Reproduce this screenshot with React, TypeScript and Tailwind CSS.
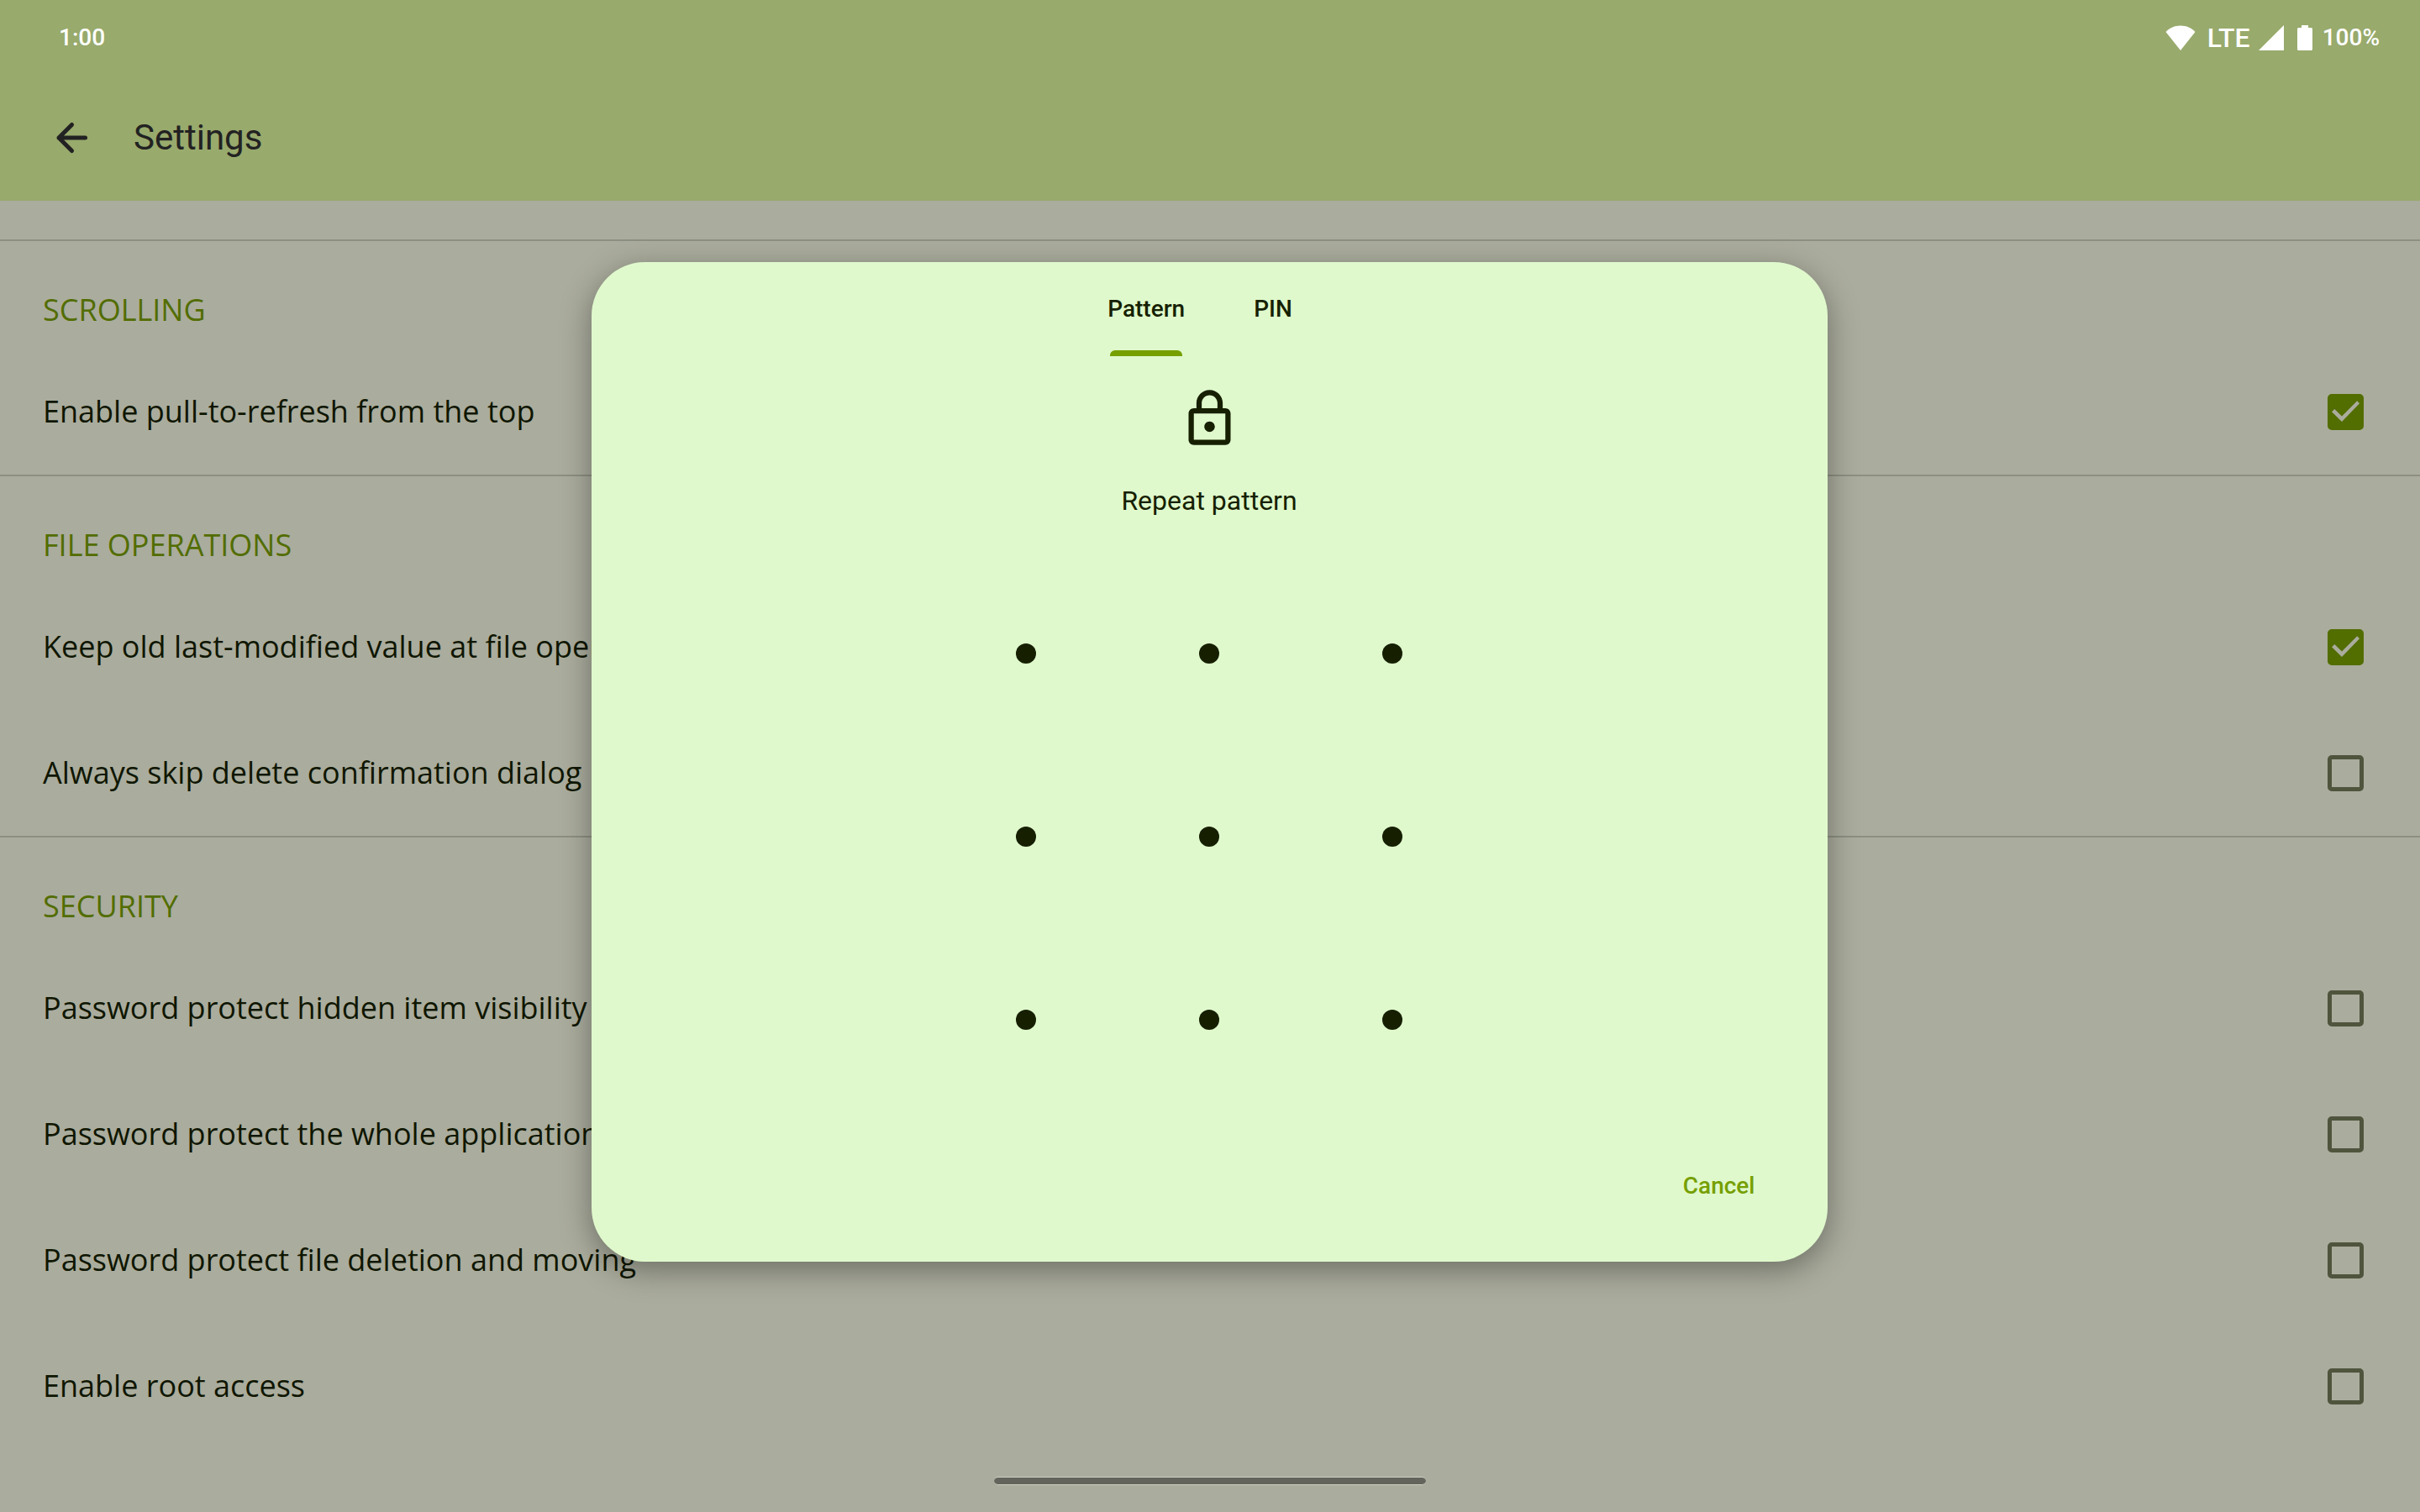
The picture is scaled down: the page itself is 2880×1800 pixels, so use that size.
import { useState } from "react";

type Setting = { id: string; label: string; checked: boolean };
type Section = { title: string; settings: Setting[] };

const sections: Section[] = [
  {
    title: "SCROLLING",
    settings: [{ id: "pull", label: "Enable pull-to-refresh from the top", checked: true }],
  },
  {
    title: "FILE OPERATIONS",
    settings: [
      { id: "keep", label: "Keep old last-modified value at file operations", checked: true },
      { id: "skip", label: "Always skip delete confirmation dialog", checked: false },
    ],
  },
  {
    title: "SECURITY",
    settings: [
      { id: "hidden", label: "Password protect hidden item visibility", checked: false },
      { id: "app", label: "Password protect the whole application", checked: false },
      { id: "delete", label: "Password protect file deletion and moving", checked: false },
      { id: "root", label: "Enable root access", checked: false },
    ],
  },
];

function StatusBar() {
  return (
    <div className="flex h-[90px] items-center justify-between pl-[70px] pr-12 text-[28px] font-medium leading-9 text-white">
      <span>1:00</span>
      <div className="flex items-center">
        <svg className="h-[30px] w-9" viewBox="0 0 36 30" fill="currentColor" aria-label="Wi-Fi">
          <path d="M18 30 0.5 8C5 3.200 11 0.500 18 0.500S31 3.200 35.500 8Z" />
        </svg>
        <span className="ml-3.5 text-[32px]">LTE</span>
        <svg className="ml-2.5 size-[30px]" viewBox="0 0 30 30" fill="currentColor" aria-label="Signal">
          <path d="M0 30 30 0V30Z" />
        </svg>
        <svg className="ml-4 h-[30px] w-[18px]" viewBox="0 0 18 30" fill="currentColor" aria-label="Battery">
          <path d="M5 0h8v3h3.500a1.500 1.500 0 0 1 1.500 1.500v24a1.500 1.500 0 0 1-1.500 1.500h-15A1.500 1.500 0 0 1 0 28.500v-24A1.500 1.500 0 0 1 1.500 3H5Z" />
        </svg>
        <span className="ml-3">100%</span>
      </div>
    </div>
  );
}

function SettingRow({ setting }: { setting: Setting }) {
  const [checked, setChecked] = useState(setting.checked);
  return (
    <div className="flex h-[150px] items-center justify-between pl-[51px] pr-[67px]">
      <label htmlFor={setting.id} className="text-[36px] leading-[48px] text-[#0f1600]">
        {setting.label}
      </label>
      <span className="relative size-[43px]">
        <input
          id={setting.id}
          type="checkbox"
          checked={checked}
          onChange={(e) => setChecked(e.target.checked)}
          className="block size-full appearance-none rounded-[5px] border-[5px] border-[#4f543d] checked:border-[#526d00] checked:bg-[#526d00]"
        />
        {checked && (
          <svg className="pointer-events-none absolute inset-0 size-full" viewBox="0 0 43 43" fill="#aaac9d" aria-hidden="true">
            <path d="M5 21.300 17 33 38 11.300 35.200 8.300 17 26.400 8.300 18Z" />
          </svg>
        )}
      </span>
    </div>
  );
}

function PatternDialog() {
  return (
    <div className="absolute inset-0 flex items-center justify-center pr-0.5 pt-3.5">
      <div
        role="dialog"
        aria-label="Repeat pattern"
        className="flex w-full max-w-[1471px] flex-col items-center rounded-[64px] bg-[#dff9cc] text-[#161f00] shadow-[0_10px_36px_rgba(0,0,0,0.36)]"
      >
        <div role="tablist" className="flex h-28 pr-6 text-[28px] font-medium leading-9">
          <button role="tab" aria-selected="true" className="relative h-full px-[42px]">
            Pattern
            <span className="absolute inset-x-0 bottom-0 mx-auto h-[7px] w-[86px] rounded-t-[6px] bg-[#769f00]" />
          </button>
          <button role="tab" aria-selected="false" className="h-full px-10">
            PIN
          </button>
        </div>
        <svg className="mt-[37px] size-[75px]" viewBox="0 0 24 24" fill="currentColor" aria-hidden="true">
          <path d="M18 8h-1V6c0-2.760-2.240-5-5-5S7 3.240 7 6v2H6c-1.100 0-2 .9-2 2v10c0 1.100.9 2 2 2h12c1.100 0 2-.9 2-2V10c0-1.100-.9-2-2-2zM9 6c0-1.660 1.340-3 3-3s3 1.340 3 3v2H9V6zm9 14H6V10h12v10zm-6-3c1.100 0 2-.9 2-2s-.9-2-2-2-2 .9-2 2 .9 2 2 2z" />
        </svg>
        <p className="mt-9 text-[32px] leading-[48px]">Repeat pattern</p>
        <div className="mt-[49px] grid size-[654px] grid-cols-3 grid-rows-3">
          {Array.from({ length: 9 }, (_, i) => (
            <button key={i} aria-label={`Dot ${i + 1}`} className="flex items-center justify-center">
              <span className="size-6 rounded-full bg-[#161f00]" />
            </button>
          ))}
        </div>
        <button className="mb-[54px] mr-[54px] mt-[53px] h-[72px] self-end rounded-full px-8 text-[28px] font-medium leading-9 text-[#769f00]">
          Cancel
        </button>
      </div>
    </div>
  );
}

export default function App() {
  return (
    <div className="relative min-h-screen bg-[#aaac9d] font-['Roboto',sans-serif]">
      <header className="bg-[#98aa6c]">
        <StatusBar />
        <div className="flex h-[149px] items-center pb-0.5 pl-[57px] text-[#222222]">
          <button aria-label="Back" className="size-14">
            <svg className="size-full" viewBox="0 0 56 56" fill="none" stroke="currentColor" strokeWidth="5" strokeLinecap="round" strokeLinejoin="round">
              <path d="M44.500 28H13M28.500 12.500 13 28 28.500 43.500" />
            </svg>
          </button>
          <h1 className="ml-[46px] text-[42px] leading-[56px]">Settings</h1>
        </div>
      </header>
      <main className="pt-[46px] font-['Open_Sans',sans-serif]">
        {sections.map((section) => (
          <section key={section.title} className="border-t-2 border-[#8c8f82]">
            <h2 className="pb-[22px] pl-[51px] pt-[58px] text-[36px] leading-[48px] text-[#526d00]">{section.title}</h2>
            {section.settings.map((setting) => (
              <SettingRow key={setting.id} setting={setting} />
            ))}
          </section>
        ))}
      </main>
      <PatternDialog />
      <div className="absolute inset-x-0 bottom-8 mx-auto h-2.5 w-[514px] rounded-full border-y border-[#cfd1c3] bg-[#63655c]" />
    </div>
  );
}
